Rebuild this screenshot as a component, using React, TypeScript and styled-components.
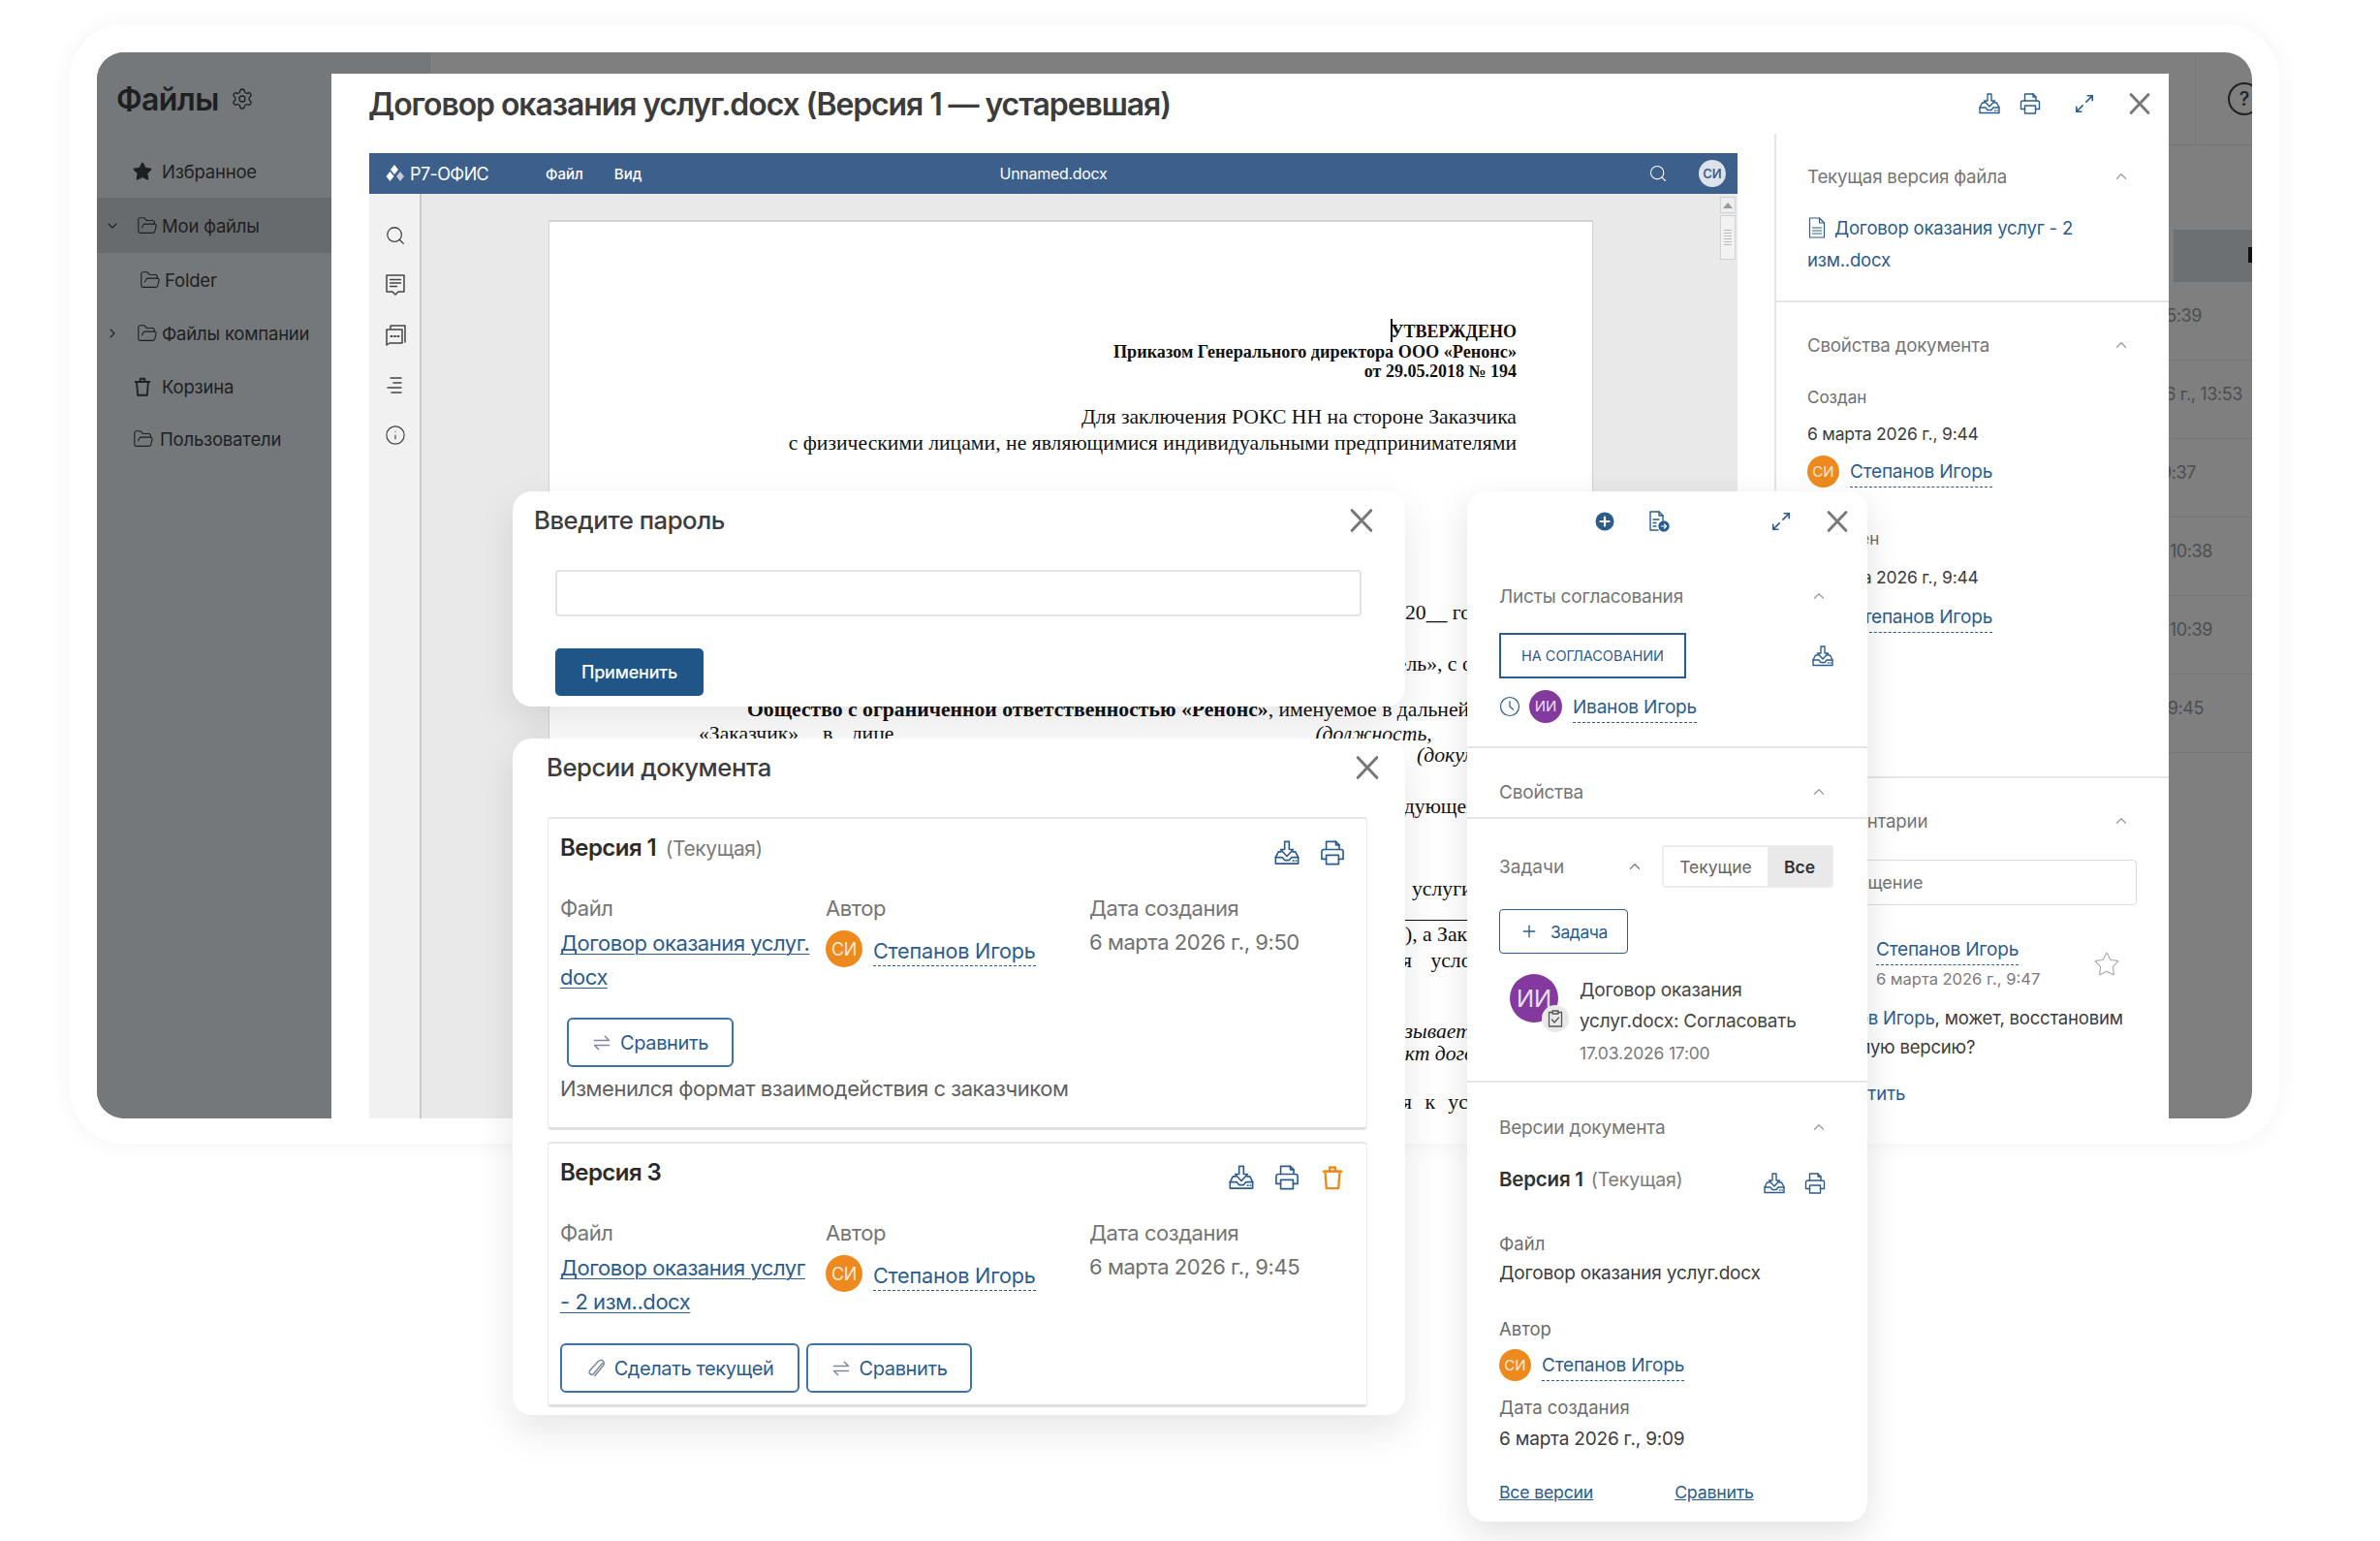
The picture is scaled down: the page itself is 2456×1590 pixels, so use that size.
import styled, { createGlobalStyle } from "styled-components";
import {
  ChevronDown,
  ChevronRight,
  ChevronUp,
  FolderOpen,
  Info,
  Plus,
  Search,
  Settings,
  Star,
} from "lucide-react";

const LINK = "#2a5c8f";
const ORANGE = "#ee8a1d";
const PURPLE = "#84399f";

const GlobalStyle = createGlobalStyle`
  html, body {
    margin: 0;
    padding: 0;
    background: #fff;
    font-family: Inter, "Noto Sans", sans-serif;
    color: #3a3a3a;
  }
  * { box-sizing: border-box; }
`;

const Page = styled.div`
  position: relative;
  width: 2456px;
  height: 1590px;
  padding: 25px 0 0 72px;
  overflow: hidden;
  background: #fff;
`;
const Frame = styled.div`
  width: 2280px;
  height: 1155px;
  padding: 29px 28px 26px;
  border-radius: 56px;
  background: #fff;
  box-shadow: 0 0 24px rgba(0, 0, 0, 0.05);
`;
const AppWindow = styled.div`
  position: relative;
  display: flex;
  width: 100%;
  height: 100%;
  border-radius: 28px;
  overflow: hidden;
  background: #7f7f7f;
`;

/* ---------- dimmed app behind the modal ---------- */
const Sidebar = styled.aside`
  width: 346px;
  flex: none;
  padding-top: 30px;
  background: #75787b;
  color: #1d1f21;
  border-right: 1px solid #848687;
`;
const SideTitle = styled.h1`
  display: flex;
  align-items: center;
  gap: 12px;
  margin: 0 0 0 20px;
  height: 36px;
  font-size: 32px;
  font-weight: 600;
  letter-spacing: -0.6px;
`;
const SideList = styled.ul`
  list-style: none;
  margin: 30px 0 0;
  padding: 0;
  width: 242px;
`;
const SideItem = styled.li<{ $active?: boolean; $height: number; $pad: number; $gap: number }>`
  position: relative;
  display: flex;
  align-items: center;
  gap: ${(p) => p.$gap}px;
  height: ${(p) => p.$height}px;
  padding-left: ${(p) => p.$pad}px;
  background: ${(p) => (p.$active ? "#686b6e" : "transparent")};
  font-size: 18.5px;
  white-space: nowrap;
  letter-spacing: -0.2px;
`;
const Caret = styled.span`
  position: absolute;
  left: 8px;
  top: 50%;
  display: flex;
  transform: translateY(-50%);
`;
const BgMain = styled.main`
  flex: 1;
  display: flex;
  flex-direction: column;
`;
const BgHeader = styled.div`
  display: flex;
  justify-content: flex-end;
  align-items: center;
  height: 96px;
  flex: none;
  border-bottom: 1px solid #737373;
`;
const HeaderCell = styled.div`
  display: flex;
  align-items: center;
  height: 100%;
  width: 59px;
  padding-left: 33px;
  border-left: 1px solid #757575;
  color: #202020;
`;
const HelpMark = styled.span`
  flex: none;
  display: flex;
  align-items: center;
  justify-content: center;
  width: 34px;
  height: 34px;
  border: 2px solid #202020;
  border-radius: 50%;
  font-size: 20px;
  font-weight: 500;
`;
const BgRows = styled.div`
  padding-top: 87px;
`;
const SelectedRow = styled.div`
  position: relative;
  height: 54px;
  margin-left: 1797px;
  background: #6d7073;
  &::after {
    content: "";
    position: absolute;
    right: 0;
    top: 18px;
    width: 4px;
    height: 16px;
    background: #111;
  }
`;
const BgRow = styled.div<{ $inset: number }>`
  display: flex;
  justify-content: flex-end;
  height: 81px;
  padding: 24px ${(p) => p.$inset}px 0 0;
  border-bottom: 1px solid #737679;
  color: #4c4e50;
  font-size: 18px;
  letter-spacing: -0.4px;
  white-space: nowrap;
`;

/* ---------- file modal ---------- */
const FileModal = styled.section`
  position: absolute;
  left: 242px;
  top: 22px;
  bottom: 0;
  width: 1896px;
  display: flex;
  flex-direction: column;
  background: #fff;
`;
const ModalHeader = styled.header`
  position: relative;
  display: flex;
  align-items: center;
  height: 62px;
  flex: none;
  padding: 0 0 0 38px;
`;
const ModalTitle = styled.h2`
  margin: 2px 0 0;
  font-size: 32px;
  line-height: 40px;
  font-weight: 600;
  color: #3c3c3c;
  letter-spacing: -1.1px;
  white-space: nowrap;
`;
const HeaderTools = styled.div`
  display: flex;
  align-items: center;
  margin-left: auto;
  padding-right: 18px;
  color: ${LINK};
`;
const IconGap = styled.span<{ $w: number }>`
  flex: none;
  width: ${(p) => p.$w}px;
`;
const ModalBody = styled.div`
  flex: 1;
  min-height: 0;
  display: flex;
`;
const DocColumn = styled.div`
  display: flex;
  flex-direction: column;
  width: 1489px;
  flex: none;
  padding: 20px 38px 0 39px;
`;
const EditorBar = styled.div`
  position: relative;
  display: flex;
  align-items: center;
  height: 42px;
  flex: none;
  padding-left: 17px;
  background: #3d5f8c;
  color: #fff;
  font-size: 16px;
`;
const Brand = styled.span`
  display: flex;
  align-items: center;
  gap: 5px;
  width: 165px;
  font-size: 18px;
  letter-spacing: -0.6px;
`;
const BarMenu = styled.span`
  margin-right: 32px;
  font-weight: 500;
  font-size: 15px;
`;
const BarFile = styled.span`
  position: absolute;
  left: 0;
  right: 0;
  text-align: center;
  font-size: 16px;
  letter-spacing: -0.3px;
`;
const BarTools = styled.span`
  position: relative;
  display: flex;
  align-items: center;
  gap: 32px;
  margin-left: auto;
  padding-right: 12px;
`;
const UserBadge = styled.span`
  display: flex;
  align-items: center;
  justify-content: center;
  width: 28px;
  height: 28px;
  border-radius: 50%;
  background: #dde3ea;
  color: #3d5f8c;
  font-size: 13px;
  font-weight: 600;
`;
const EditorBody = styled.div`
  flex: 1;
  min-height: 0;
  display: flex;
`;
const ToolRail = styled.div`
  width: 54px;
  flex: none;
  display: grid;
  grid-auto-rows: 51.5px;
  justify-items: center;
  align-items: center;
  align-content: start;
  padding: 17px 0 0 2px;
  background: #f1f1f1;
  border-right: 2px solid #c8cbcd;
  color: #444;
`;
const DocArea = styled.div`
  position: relative;
  flex: 1;
  min-width: 0;
  padding: 27px 149px 0 131px;
  overflow: hidden;
  background: #e9e9e9;
`;
const DocPage = styled.div`
  height: 1200px;
  padding-top: 103px;
  background: #fff;
  border: 1px solid #cfd3d6;
  border-top-width: 2px;
  font-family: "Liberation Serif", "Times New Roman", serif;
  color: #111;
  overflow: hidden;
`;
const DocLine = styled.p<{ $mt: number; $left?: number; $right?: boolean; $bold?: boolean; $size?: number; $italic?: boolean }>`
  position: relative;
  margin: ${(p) => p.$mt}px 0 0;
  padding: ${(p) => (p.$right ? "0 78px 0 0" : `0 0 0 ${p.$left ?? 0}px`)};
  height: 20px;
  line-height: 20px;
  text-align: ${(p) => (p.$right ? "right" : "left")};
  font-size: ${(p) => p.$size ?? 21.7}px;
  font-weight: ${(p) => (p.$bold ? 700 : 400)};
  font-style: ${(p) => (p.$italic ? "italic" : "normal")};
  white-space: nowrap;
`;
const Caretmark = styled.span`
  position: absolute;
  left: 868px;
  top: -3px;
  width: 2px;
  height: 24px;
  background: #111;
`;
const DocGap = styled.span`
  display: inline-block;
  width: 435px;
`;
const DocRule = styled.span`
  position: absolute;
  left: 860px;
  right: 0;
  top: -5px;
  border-top: 1px solid #111;
`;
const Thin = styled.span`
  font-weight: 400;
`;
const WideWords = styled.span<{ $space: number }>`
  word-spacing: ${(p) => p.$space}px;
`;
const ScrollBar = styled.div`
  position: absolute;
  right: 2px;
  top: 3px;
  width: 16px;
  display: flex;
  flex-direction: column;
  gap: 2px;
`;
const ScrollArrow = styled.div`
  height: 17px;
  border: 1px solid #cfd3d6;
  background: #eee;
  display: flex;
  align-items: center;
  justify-content: center;
  &::before {
    content: "";
    border-left: 5px solid transparent;
    border-right: 5px solid transparent;
    border-bottom: 6px solid #9a9a9a;
  }
`;
const ScrollThumb = styled.div`
  height: 46px;
  border: 1px solid #cfd3d6;
  background: repeating-linear-gradient(#f2f2f2 0 2px, #bbb 2px 3px) center 12px / 8px 20px no-repeat #f2f2f2;
`;

/* side column of the file modal */
const SideColumn = styled.div`
  flex: 1;
  min-width: 0;
  border-left: 2px solid #e6e6e6;
  font-size: 18px;
`;
const SideSection = styled.div<{ $height: number; $last?: boolean }>`
  height: ${(p) => p.$height}px;
  padding: 32px 33px 0 32px;
  border-bottom: ${(p) => (p.$last ? "none" : "2px solid #e6e6e6")};
  overflow: hidden;
`;
const SectionHead = styled.div<{ $pad?: number }>`
  display: flex;
  align-items: center;
  justify-content: space-between;
  height: 24px;
  padding-right: ${(p) => p.$pad ?? 0}px;
  color: #757575;
  font-size: 18.7px;
  letter-spacing: -0.2px;
  white-space: nowrap;
  svg {
    color: #9a9a9a;
  }
`;
const FileLink = styled.div`
  margin-top: 25px;
  color: ${LINK};
  font-size: 18.5px;
  line-height: 33px;
  letter-spacing: -0.2px;
  svg {
    display: inline-block;
    vertical-align: -4px;
    margin: 0 9px 0 1px;
  }
`;
const SmallLabel = styled.div<{ $mt: number; $size?: number }>`
  margin-top: ${(p) => p.$mt}px;
  color: #6c6c6c;
  font-size: ${(p) => p.$size ?? 17}px;
  line-height: 22px;
`;
const DateText = styled.div<{ $mt: number; $size?: number }>`
  margin-top: ${(p) => p.$mt}px;
  color: #3c3c3c;
  font-size: ${(p) => p.$size ?? 17.5}px;
  line-height: 22px;
  letter-spacing: -0.2px;
  white-space: nowrap;
`;
const PersonRow = styled.div<{ $mt: number; $gap?: number }>`
  display: flex;
  align-items: center;
  gap: ${(p) => p.$gap ?? 11}px;
  margin-top: ${(p) => p.$mt}px;
`;
const Avatar = styled.span<{ $size: number; $color: string; $font: number }>`
  position: relative;
  display: flex;
  align-items: center;
  justify-content: center;
  flex: none;
  width: ${(p) => p.$size}px;
  height: ${(p) => p.$size}px;
  border-radius: 50%;
  background: ${(p) => p.$color};
  color: rgba(255, 255, 255, 0.85);
  font-size: ${(p) => p.$font}px;
`;
const PersonName = styled.span<{ $size?: number; $up?: number }>`
  padding-bottom: 4px;
  border-bottom: 1px dashed ${LINK};
  margin-top: ${(p) => p.$up ?? 7}px;
  color: ${LINK};
  font-size: ${(p) => p.$size ?? 19}px;
  line-height: 22px;
  letter-spacing: -0.2px;
  white-space: nowrap;
`;
const MessageInput = styled.div`
  display: flex;
  align-items: center;
  height: 47px;
  margin-top: 28px;
  padding-left: 16px;
  border: 1px solid #dcdcdc;
  border-radius: 4px;
  color: #757575;
  font-size: 18px;
`;
const CommentHead = styled.div`
  display: flex;
  align-items: center;
  margin-top: 35px;
  padding-left: 71px;
  padding-right: 17px;
`;
const CommentMeta = styled.div`
  flex: 1;
`;
const CommentDate = styled.div`
  margin-top: 9px;
  color: #7a7a7a;
  font-size: 16.5px;
  line-height: 20px;
  white-space: nowrap;
`;
const CommentBody = styled.p`
  margin: 15px 0 0 7px;
  color: #3c3c3c;
  font-size: 18.5px;
  line-height: 30px;
  letter-spacing: -0.2px;
  white-space: nowrap;
`;
const Mention = styled.span`
  color: ${LINK};
`;
const ReplyLink = styled.div`
  margin: 22px 0 0 18px;
  color: ${LINK};
  font-size: 18.5px;
`;

/* ---------- floating dialogs ---------- */
const Dialog = styled.div<{ $top: number; $height: number }>`
  position: absolute;
  left: 529px;
  top: ${(p) => p.$top}px;
  width: 921px;
  height: ${(p) => p.$height}px;
  border-radius: 20px;
  background: #fff;
  box-shadow: 0 16px 40px rgba(0, 0, 0, 0.1);
`;
const DialogHead = styled.div<{ $left: number; $right: number; $height: number }>`
  display: flex;
  align-items: center;
  justify-content: space-between;
  height: ${(p) => p.$height}px;
  padding: 0 ${(p) => p.$right}px 0 ${(p) => p.$left}px;
`;
const DialogTitle = styled.h3`
  margin: 0;
  color: #3c3c3c;
  font-size: 25.7px;
  font-weight: 500;
  letter-spacing: -0.45px;
`;
const PasswordBody = styled.div`
  padding: 22px 45px 0 44px;
`;
const PasswordField = styled.div`
  height: 48px;
  border: 2px solid #e4e4e4;
  border-radius: 4px;
`;
const ApplyButton = styled.button`
  display: block;
  width: 153px;
  height: 49px;
  margin-top: 33px;
  padding: 0;
  border: none;
  border-radius: 5px;
  background: #1f5688;
  color: #fff;
  font: 500 18px Inter, sans-serif;
  letter-spacing: -0.2px;
`;
const VersionList = styled.div`
  display: flex;
  flex-direction: column;
  gap: 12px;
  margin: 22px 39px 0 36px;
`;
const VersionCard = styled.article<{ $height: number }>`
  height: ${(p) => p.$height}px;
  padding: 15px 21px 0 12px;
  border: 1px solid #ececec;
  border-top: 2px solid #e6e6e6;
  border-bottom: 3px solid #e0e0e0;
  border-radius: 4px;
`;
const CardHead = styled.div`
  display: flex;
  align-items: flex-start;
  height: 44px;
`;
const CardTitle = styled.span`
  color: #2b2b2b;
  font-size: 24px;
  line-height: 30px;
  font-weight: 600;
  letter-spacing: -0.55px;
  white-space: nowrap;
`;
const CardNote = styled.span`
  margin-left: 4px;
  color: #7c7c7c;
  font-size: 21px;
  font-weight: 400;
  letter-spacing: -0.4px;
`;
const CardTools = styled.div`
  display: flex;
  gap: 19px;
  margin: 6px 0 0 auto;
  color: ${LINK};
`;
const InfoGrid = styled.div`
  display: grid;
  grid-template-columns: 274px 272px 1fr;
  margin-top: 20px;
  font-size: 22px;
  letter-spacing: -0.45px;
`;
const InfoLabel = styled.div`
  color: #757575;
  line-height: 26px;
  white-space: nowrap;
`;
const InfoLink = styled.a`
  display: block;
  margin-top: 6px;
  width: 268px;
  color: ${LINK};
  line-height: 35px;
  text-decoration: underline;
  text-underline-offset: 3px;
  text-decoration-thickness: 1px;
`;
const InfoDate = styled.div`
  margin-top: 9px;
  color: #707070;
  line-height: 26px;
  white-space: nowrap;
`;
const AuthorCell = styled.div`
  display: flex;
  align-items: flex-start;
  gap: 11px;
  margin-top: 10px;
`;
const OutlineButton = styled.button<{ $width: number }>`
  display: inline-flex;
  align-items: center;
  justify-content: center;
  gap: 9px;
  width: ${(p) => p.$width}px;
  height: 51px;
  padding: 0;
  border: 2px solid #3f72a6;
  border-radius: 6px;
  background: #fff;
  color: ${LINK};
  font: 400 20px Inter, sans-serif;
  letter-spacing: -0.4px;
  white-space: nowrap;
`;
const ButtonRow = styled.div<{ $mt: number; $left?: number }>`
  display: flex;
  gap: 7px;
  margin: ${(p) => p.$mt}px 0 0 ${(p) => p.$left ?? 0}px;
`;
const CardText = styled.div`
  margin-top: 9px;
  color: #5f5f5f;
  font-size: 22px;
  line-height: 26px;
  letter-spacing: -0.45px;
  white-space: nowrap;
`;

/* right floating panel */
const RightPanel = styled.aside`
  position: absolute;
  left: 1514px;
  top: 507px;
  width: 413px;
  height: 1063px;
  border-radius: 20px;
  background: #fff;
  box-shadow: 0 12px 36px rgba(0, 0, 0, 0.12);
  font-size: 18px;
`;
const PanelTop = styled.div`
  display: flex;
  align-items: center;
  height: 62px;
  padding-left: 132px;
  color: ${LINK};
`;
const PanelBlock = styled.div<{ $height: number; $line?: boolean }>`
  display: flow-root;
  height: ${(p) => p.$height}px;
  padding: 0 33px;
  border-bottom: ${(p) => (p.$line ? "2px solid #e6e6e6" : "none")};
`;
const PanelHead = styled(SectionHead)<{ $top?: number }>`
  margin-top: ${(p) => p.$top ?? 0}px;
  padding-right: 8px;
  font-size: 19px;
`;
const StatusRow = styled.div`
  display: flex;
  align-items: center;
  justify-content: space-between;
  margin-top: 26px;
  padding-right: 1px;
  color: ${LINK};
`;
const StatusTag = styled.span`
  display: flex;
  align-items: center;
  justify-content: center;
  width: 193px;
  height: 47px;
  border: 2px solid ${LINK};
  color: ${LINK};
  font-size: 14.5px;
`;
const ClockWrap = styled.span`
  display: flex;
  margin-right: -2px;
  color: ${LINK};
`;
const TaskHead = styled.div`
  display: flex;
  align-items: center;
  margin-top: 27px;
  color: #757575;
  font-size: 19px;
`;
const TaskTitle = styled.span`
  width: 131px;
`;
const Segments = styled.div`
  display: flex;
  height: 44px;
  margin-left: 19px;
  border: 2px solid #ececec;
  border-radius: 4px;
  overflow: hidden;
`;
const Segment = styled.span<{ $active?: boolean }>`
  display: flex;
  align-items: center;
  justify-content: center;
  width: ${(p) => (p.$active ? 66 : 107)}px;
  background: ${(p) => (p.$active ? "#e9e9e9" : "#fff")};
  color: ${(p) => (p.$active ? "#333" : "#666")};
  font-size: 17.5px;
  font-weight: ${(p) => (p.$active ? 600 : 400)};
`;
const TaskButton = styled(OutlineButton)`
  height: 46px;
  margin-top: 22px;
  gap: 12px;
  font-size: 17.5px;
  border-width: 1.5px;
  border-color: ${LINK};
  border-radius: 4px;
`;
const TaskRow = styled.div`
  display: flex;
  gap: 22px;
  margin: 21px 0 0 11px;
`;
const TaskBadge = styled.span`
  position: absolute;
  right: -11px;
  bottom: -10px;
  display: flex;
  align-items: center;
  justify-content: center;
  width: 28px;
  height: 28px;
  border-radius: 50%;
  background: #e9e9e9;
  color: #555;
`;
const TaskText = styled.div`
  margin-top: 1px;
  color: #444;
  font-size: 19px;
  line-height: 32px;
  letter-spacing: -0.2px;
  white-space: nowrap;
`;
const TaskDate = styled.div`
  color: #7a7a7a;
  font-size: 17.5px;
  line-height: 33px;
`;
const PanelVersion = styled.div`
  display: flex;
  align-items: flex-start;
  margin-top: 30px;
  color: ${LINK};
`;
const PanelVersionName = styled.span`
  color: #333;
  font-size: 20.5px;
  font-weight: 600;
  line-height: 24px;
  white-space: nowrap;
  letter-spacing: -0.2px;
`;
const PanelVersionNote = styled.span`
  margin-left: 8px;
  color: #7c7c7c;
  font-size: 19.5px;
  font-weight: 400;
`;
const PanelTools = styled.div`
  display: flex;
  gap: 18px;
  margin: 4px 0 0 auto;
  padding-right: 9px;
`;
const PanelFoot = styled.div`
  display: flex;
  gap: 84px;
  margin-top: 33px;
  color: ${LINK};
  font-size: 17.7px;
  letter-spacing: -0.2px;
  text-decoration: underline;
  white-space: nowrap;
`;

/* ---------- icons ---------- */
const IconSvg = styled.svg`
  display: block;
  flex: none;
  fill: none;
  stroke: currentColor;
  stroke-linecap: round;
  stroke-linejoin: round;
`;

type IconProps = { size?: number };

const DownloadIcon = ({ size = 28 }: IconProps) => (
  <IconSvg width={size} height={size} viewBox="0 0 24 24" strokeWidth={1.4}>
    <path d="M10 2h4v7h3.5L12 15 6.5 9H10z" />
    <path d="M7 11H4.5L2 16v5.5h20V16l-2.5-5H17" />
    <path d="M2 16h6l2 2.5h4l2-2.5h6M17.5 19h.5M20 19h.3" />
  </IconSvg>
);
const PrintIcon = ({ size = 28 }: IconProps) => (
  <IconSvg width={size} height={size} viewBox="0 0 24 24" strokeWidth={1.4}>
    <path d="M6.5 9V2h8.5l3 3v4" />
    <path d="M15 2v3h3" />
    <path d="M6.5 17.5H2.5V11a2 2 0 0 1 2-2h15a2 2 0 0 1 2 2v6.5h-4" />
    <path d="M6.5 14h11v8h-11z" />
  </IconSvg>
);
const ExpandIcon = ({ size = 22 }: IconProps) => (
  <IconSvg width={size} height={size} viewBox="0 0 24 24" strokeWidth={1.8}>
    <path d="M14 10l7-7M15.5 3H21v5.5" />
    <path d="M10 14l-7 7M8.5 21H3v-5.5" />
  </IconSvg>
);
const CloseIcon = ({ size = 24 }: IconProps) => (
  <IconSvg width={size} height={size} viewBox="0 0 24 24" strokeWidth={2.8} color="#777">
    <path d="M3 2.5l18 19M21 2.5L3 21.5" />
  </IconSvg>
);
const CompareIcon = () => (
  <IconSvg width={20} height={20} viewBox="0 0 24 24" strokeWidth={1.8} color="#7b8b9b">
    <path d="M3 9h18l-5-5M21 15H3l5 5" />
  </IconSvg>
);
const ClipIcon = () => (
  <IconSvg width={20} height={24} viewBox="0 0 24 24" strokeWidth={1.8} color="#7b8b9b">
    <path d="M20 5.5 9 18.5a3 3 0 0 1-4.5-4L15 3a4 4 0 0 1 6 5.3L10.5 21" />
  </IconSvg>
);
const TrashIcon = ({ size = 28, tint = "#333" }: IconProps & { tint?: string }) => (
  <IconSvg width={size} height={size} viewBox="0 0 24 24" strokeWidth={2} color={tint}>
    <path d="M5.5 6.5h13l-1.2 15H6.7z" />
    <path d="M4 6.5h16M9.5 6.5V3h5v3.5" />
  </IconSvg>
);
const DocIcon = () => (
  <IconSvg width={18} height={22} viewBox="0 0 18 22" strokeWidth={1.2}>
    <path d="M1.5 1h10l5 5v15h-15z" />
    <path d="M11.5 1v5h5M4.5 11h9M4.5 14h9M4.5 17h9" />
  </IconSvg>
);
const CommentIcon = () => (
  <IconSvg width={22} height={24} viewBox="0 0 22 24" strokeWidth={1.5}>
    <path d="M2 2h18v17h-6l-3 3-3-3H2z" />
    <path d="M5.5 6.5h11M5.5 10h11M5.5 13.5h7" />
  </IconSvg>
);
const ChatsIcon = () => (
  <IconSvg width={22} height={24} viewBox="0 0 22 24" strokeWidth={1.5}>
    <path d="M6 5V2h15v17" />
    <path d="M2 6h16v14H5l-3 2z" />
    <path d="M6.5 13h1M10 13h1M13.5 13h1" strokeWidth={2} />
  </IconSvg>
);
const OutlineListIcon = () => (
  <IconSvg width={20} height={20} viewBox="0 0 20 20" strokeWidth={1.5}>
    <path d="M5 3h11M8 8h8M2 13h14M6 18h10" />
  </IconSvg>
);
const BrandMark = () => (
  <IconSvg width={20} height={18} viewBox="0 0 20 18" strokeWidth={0}>
    <path d="M9 0l4 5-4 5-4-5z" fill="#fff" />
    <path d="M4.5 7l4 5-4 5-4-5z" fill="#fff" />
    <path d="M15 7l4 5-4 5-4-5z" fill="#c3ccd8" />
  </IconSvg>
);
const PlusCircleIcon = () => (
  <IconSvg width={20} height={20} viewBox="0 0 20 20" strokeWidth={0}>
    <circle cx="10" cy="10" r="9.5" fill={LINK} />
    <path d="M10 5.5v9M5.5 10h9" stroke="#fff" strokeWidth={2.2} />
  </IconSvg>
);
const DocArrowIcon = () => (
  <IconSvg width={22} height={22} viewBox="0 0 22 22" strokeWidth={1.4}>
    <path d="M10 20H2V1h9l4 4v5" />
    <path d="M11 1v4h4M5 9h6M5 12.5h3M5 16h3" />
    <circle cx="16" cy="16" r="5" fill={LINK} />
    <path d="M13.5 16h5M16.5 14l2 2-2 2" stroke="#fff" strokeWidth={1.2} />
  </IconSvg>
);
const ClockIcon = () => (
  <IconSvg width={22} height={22} viewBox="0 0 22 22" strokeWidth={1.2}>
    <circle cx="11" cy="11" r="9.5" />
    <path d="M11 5.5V11l3.5 3" />
  </IconSvg>
);
const TaskClipIcon = () => (
  <IconSvg width={16} height={18} viewBox="0 0 16 18" strokeWidth={1.3}>
    <path d="M5 2.5H1.5V17h13V2.5H11" />
    <path d="M5 1h6v3H5zM4.5 10l2.5 3 4.5-5" />
  </IconSvg>
);

/* ---------- data ---------- */
const bgRows = [
  { time: "6 марта 2026 г., 15:39", inset: 52 },
  { time: "6 марта 2026 г., 13:53", inset: 10 },
  { time: "6 марта 2026 г., 9:37", inset: 58 },
  { time: "6 марта 2026 г., 10:38", inset: 41 },
  { time: "6 марта 2026 г., 10:39", inset: 41 },
  { time: "6 марта 2026 г., 9:45", inset: 50 },
];

const sideLines = [
  { text: "20__ года", mt: 155, left: 883 },
  { text: "«Исполнитель», с одной стороны", mt: 33, left: 773 },
];

const tailLines = [
  { text: "(документ", mt: 2, left: 895, italic: true },
  { text: "следующем:", mt: 33, left: 852 },
  { text: "услуги", mt: 65, left: 890 },
  { text: "), а Заказчик", mt: 27, left: 883, rule: true },
  { text: "я условия", mt: 7, left: 880, space: 14 },
  { text: "называет", mt: 53, left: 861, italic: true },
  { text: "акт договора", mt: 3, left: 872, italic: true },
  { text: "я к услугам", mt: 30, left: 880, space: 8 },
];

const Chevron = () => <ChevronUp size={18} strokeWidth={1.6} />;

const PersonLink = ({ up }: { up?: number }) => <PersonName $up={up}>Степанов Игорь</PersonName>;

const App = () => {
  return (
    <Page>
      <GlobalStyle />
      <Frame>
        <AppWindow>
          <Sidebar>
            <SideTitle>
              Файлы <Settings size={24} strokeWidth={1.3} />
            </SideTitle>
            <SideList>
              <SideItem $height={54} $pad={36} $gap={9}>
                <Star size={22} fill="currentColor" strokeWidth={1} /> Избранное
              </SideItem>
              <SideItem $active $height={57} $pad={41} $gap={4}>
                <Caret>
                  <ChevronDown size={16} strokeWidth={1.6} />
                </Caret>
                <FolderOpen size={22} strokeWidth={1.2} /> Мои файлы
              </SideItem>
              <SideItem $height={55} $pad={44} $gap={4}>
                <FolderOpen size={22} strokeWidth={1.2} /> Folder
              </SideItem>
              <SideItem $height={56} $pad={41} $gap={4}>
                <Caret>
                  <ChevronRight size={16} strokeWidth={1.6} />
                </Caret>
                <FolderOpen size={22} strokeWidth={1.2} /> Файлы компании
              </SideItem>
              <SideItem $height={54} $pad={36} $gap={9}>
                <TrashIcon size={22} tint="#1d1f21" /> Корзина
              </SideItem>
              <SideItem $height={54} $pad={37} $gap={6}>
                <FolderOpen size={22} strokeWidth={1.2} /> Пользователи
              </SideItem>
            </SideList>
          </Sidebar>
          <BgMain>
            <BgHeader>
              <HeaderCell>
                <HelpMark>?</HelpMark>
              </HeaderCell>
            </BgHeader>
            <BgRows>
              <SelectedRow />
              {bgRows.map((row) => (
                <BgRow key={row.time + row.inset} $inset={row.inset}>
                  {row.time}
                </BgRow>
              ))}
            </BgRows>
          </BgMain>

          <FileModal>
            <ModalHeader>
              <ModalTitle>Договор оказания услуг.docx (Версия 1 — устаревшая)</ModalTitle>
              <HeaderTools>
                <DownloadIcon size={24} />
                <IconGap $w={18} />
                <PrintIcon size={24} />
                <IconGap $w={33} />
                <ExpandIcon />
                <IconGap $w={34} />
                <CloseIcon />
              </HeaderTools>
            </ModalHeader>
            <ModalBody>
              <DocColumn>
                <EditorBar>
                  <Brand>
                    <BrandMark /> Р7-ОФИС
                  </Brand>
                  <BarMenu>Файл</BarMenu>
                  <BarMenu>Вид</BarMenu>
                  <BarFile>Unnamed.docx</BarFile>
                  <BarTools>
                    <Search size={20} strokeWidth={1.3} />
                    <UserBadge>СИ</UserBadge>
                  </BarTools>
                </EditorBar>
                <EditorBody>
                  <ToolRail>
                    <Search size={22} strokeWidth={1.4} />
                    <CommentIcon />
                    <ChatsIcon />
                    <OutlineListIcon />
                    <Info size={22} strokeWidth={1.3} />
                  </ToolRail>
                  <DocArea>
                    <DocPage>
                      <DocLine $mt={0} $right $bold $size={18}>
                        <Caretmark />
                        УТВЕРЖДЕНО
                      </DocLine>
                      <DocLine $mt={1} $right $bold $size={18.2}>
                        Приказом Генерального директора ООО «Ренонс»
                      </DocLine>
                      <DocLine $mt={0} $right $bold $size={18}>
                        от 29.05.2018 № 194
                      </DocLine>
                      <DocLine $mt={27} $right>
                        Для заключения РОКС НН на стороне Заказчика
                      </DocLine>
                      <DocLine $mt={7} $right>
                        с физическими лицами, не являющимися индивидуальными предпринимателями
                      </DocLine>
                      {sideLines.map((line) => (
                        <DocLine key={line.text} $mt={line.mt} $left={line.left}>
                          {line.text}
                        </DocLine>
                      ))}
                      <DocLine $mt={27} $left={204} $bold>
                        Общество с ограниченной ответственностью «Ренонс»
                        <Thin>, именуемое в дальнейшем</Thin>
                      </DocLine>
                      <DocLine $mt={5} $left={154}>
                        <WideWords $space={14}>«Заказчик», в лице</WideWords>
                        <DocGap />
                        <em>(должность,</em>
                      </DocLine>
                      {tailLines.map((line) => (
                        <DocLine key={line.text} $mt={line.mt} $left={line.left} $italic={line.italic}>
                          {line.rule && <DocRule />}
                          <WideWords $space={line.space ?? 0}>{line.text}</WideWords>
                        </DocLine>
                      ))}
                    </DocPage>
                    <ScrollBar>
                      <ScrollArrow />
                      <ScrollThumb />
                    </ScrollBar>
                  </DocArea>
                </EditorBody>
              </DocColumn>

              <SideColumn>
                <SideSection $height={174}>
                  <SectionHead $pad={7}>
                    Текущая версия файла <Chevron />
                  </SectionHead>
                  <FileLink>
                    <DocIcon />
                    Договор оказания услуг - 2
                    <br />
                    изм..docx
                  </FileLink>
                </SideSection>
                <SideSection $height={491}>
                  <SectionHead $pad={7}>
                    Свойства документа <Chevron />
                  </SectionHead>
                  <SmallLabel $mt={31}>Создан</SmallLabel>
                  <DateText $mt={16}>6 марта 2026 г., 9:44</DateText>
                  <PersonRow $mt={10}>
                    <Avatar $size={33} $color={ORANGE} $font={15}>
                      СИ
                    </Avatar>
                    <PersonLink />
                  </PersonRow>
                  <SmallLabel $mt={42}>Изменен</SmallLabel>
                  <DateText $mt={18}>6 марта 2026 г., 9:44</DateText>
                  <PersonRow $mt={12}>
                    <Avatar $size={33} $color={ORANGE} $font={15}>
                      СИ
                    </Avatar>
                    <PersonLink />
                  </PersonRow>
                </SideSection>
                <SideSection $height={351} $last>
                  <SectionHead $pad={7}>
                    Комментарии <Chevron />
                  </SectionHead>
                  <MessageInput>Сообщение</MessageInput>
                  <CommentHead>
                    <CommentMeta>
                      <PersonLink up={0} />
                      <CommentDate>6 марта 2026 г., 9:47</CommentDate>
                    </CommentMeta>
                    <Star size={28} strokeWidth={1} color="#aaa" />
                  </CommentHead>
                  <CommentBody>
                    <Mention>Иванов Игорь</Mention>, может, восстановим
                    <br />
                    прошлую версию?
                  </CommentBody>
                  <ReplyLink>Ответить</ReplyLink>
                </SideSection>
              </SideColumn>
            </ModalBody>
          </FileModal>
        </AppWindow>
      </Frame>

      <Dialog $top={507} $height={222}>
        <DialogHead $left={22} $right={32} $height={59}>
          <DialogTitle>Введите пароль</DialogTitle>
          <CloseIcon size={26} />
        </DialogHead>
        <PasswordBody>
          <PasswordField />
          <ApplyButton>Применить</ApplyButton>
        </PasswordBody>
      </Dialog>

      <Dialog $top={762} $height={698}>
        <DialogHead $left={35} $right={26} $height={59}>
          <DialogTitle>Версии документа</DialogTitle>
          <CloseIcon size={26} />
        </DialogHead>
        <VersionList>
          <VersionCard $height={323}>
            <CardHead>
              <CardTitle>
                Версия 1 <CardNote>(Текущая)</CardNote>
              </CardTitle>
              <CardTools>
                <DownloadIcon />
                <PrintIcon />
              </CardTools>
            </CardHead>
            <InfoGrid>
              <div>
                <InfoLabel>Файл</InfoLabel>
                <InfoLink>Договор оказания услуг. docx</InfoLink>
              </div>
              <div>
                <InfoLabel>Автор</InfoLabel>
                <AuthorCell>
                  <Avatar $size={38} $color={ORANGE} $font={18}>
                    СИ
                  </Avatar>
                  <PersonName $size={21.6} $up={10}>
                    Степанов Игорь
                  </PersonName>
                </AuthorCell>
              </div>
              <div>
                <InfoLabel>Дата создания</InfoLabel>
                <InfoDate>6 марта 2026 г., 9:50</InfoDate>
              </div>
            </InfoGrid>
            <ButtonRow $mt={24} $left={7}>
              <OutlineButton $width={172}>
                <CompareIcon /> Сравнить
              </OutlineButton>
            </ButtonRow>
            <CardText>Изменился формат взаимодействия с заказчиком</CardText>
          </VersionCard>
          <VersionCard $height={274}>
            <CardHead>
              <CardTitle>Версия 3</CardTitle>
              <CardTools>
                <DownloadIcon />
                <PrintIcon />
                <TrashIcon tint={ORANGE} />
              </CardTools>
            </CardHead>
            <InfoGrid>
              <div>
                <InfoLabel>Файл</InfoLabel>
                <InfoLink>Договор оказания услуг -&nbsp;2 изм..docx</InfoLink>
              </div>
              <div>
                <InfoLabel>Автор</InfoLabel>
                <AuthorCell>
                  <Avatar $size={38} $color={ORANGE} $font={18}>
                    СИ
                  </Avatar>
                  <PersonName $size={21.6} $up={10}>
                    Степанов Игорь
                  </PersonName>
                </AuthorCell>
              </div>
              <div>
                <InfoLabel>Дата создания</InfoLabel>
                <InfoDate>6 марта 2026 г., 9:45</InfoDate>
              </div>
            </InfoGrid>
            <ButtonRow $mt={25}>
              <OutlineButton $width={247}>
                <ClipIcon /> Сделать текущей
              </OutlineButton>
              <OutlineButton $width={171}>
                <CompareIcon /> Сравнить
              </OutlineButton>
            </ButtonRow>
          </VersionCard>
        </VersionList>
      </Dialog>

      <RightPanel>
        <PanelTop>
          <PlusCircleIcon />
          <IconGap $w={35} />
          <DocArrowIcon />
          <IconGap $w={104} />
          <ExpandIcon />
          <IconGap $w={35} />
          <CloseIcon size={24} />
        </PanelTop>
        <PanelBlock $height={203} $line>
          <PanelHead $top={34}>
            Листы согласования <Chevron />
          </PanelHead>
          <StatusRow>
            <StatusTag>НА СОГЛАСОВАНИИ</StatusTag>
            <DownloadIcon size={24} />
          </StatusRow>
          <PersonRow $mt={11}>
            <ClockWrap>
              <ClockIcon />
            </ClockWrap>
            <Avatar $size={34} $color={PURPLE} $font={15}>
              ИИ
            </Avatar>
            <PersonName $up={8}>Иванов Игорь</PersonName>
          </PersonRow>
        </PanelBlock>
        <PanelBlock $height={73} $line>
          <PanelHead $top={33}>
            Свойства <Chevron />
          </PanelHead>
        </PanelBlock>
        <PanelBlock $height={272} $line>
          <TaskHead>
            <TaskTitle>Задачи</TaskTitle>
            <Chevron />
            <Segments>
              <Segment>Текущие</Segment>
              <Segment $active>Все</Segment>
            </Segments>
          </TaskHead>
          <TaskButton $width={133}>
            <Plus size={20} strokeWidth={1.6} /> Задача
          </TaskButton>
          <TaskRow>
            <Avatar $size={50} $color={PURPLE} $font={24}>
              ИИ
              <TaskBadge>
                <TaskClipIcon />
              </TaskBadge>
            </Avatar>
            <TaskText>
              Договор оказания
              <br />
              услуг.docx: Согласовать
              <TaskDate>17.03.2026 17:00</TaskDate>
            </TaskText>
          </TaskRow>
        </PanelBlock>
        <PanelBlock $height={453}>
          <PanelHead $top={34}>
            Версии документа <Chevron />
          </PanelHead>
          <PanelVersion>
            <PanelVersionName>
              Версия 1<PanelVersionNote>(Текущая)</PanelVersionNote>
            </PanelVersionName>
            <PanelTools>
              <DownloadIcon size={24} />
              <PrintIcon size={24} />
            </PanelTools>
          </PanelVersion>
          <SmallLabel $mt={39} $size={18.5}>
            Файл
          </SmallLabel>
          <DateText $mt={9} $size={19}>
            Договор оказания услуг.docx
          </DateText>
          <SmallLabel $mt={35} $size={18.5}>
            Автор
          </SmallLabel>
          <PersonRow $mt={9}>
            <Avatar $size={33} $color={ORANGE} $font={15}>
              СИ
            </Avatar>
            <PersonLink />
          </PersonRow>
          <SmallLabel $mt={16} $size={18.5}>
            Дата создания
          </SmallLabel>
          <DateText $mt={11} $size={19}>
            6 марта 2026 г., 9:09
          </DateText>
          <PanelFoot>
            <span>Все версии</span>
            <span>Сравнить</span>
          </PanelFoot>
        </PanelBlock>
      </RightPanel>
    </Page>
  );
};

export default App;
